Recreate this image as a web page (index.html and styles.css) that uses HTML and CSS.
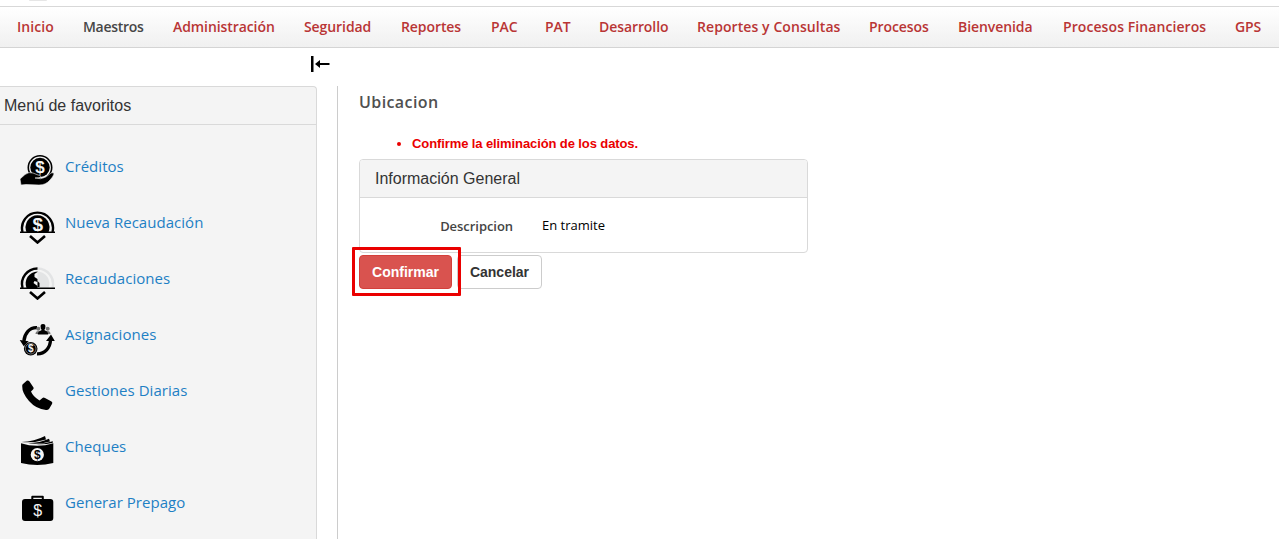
FILE: index.html
```html
<!DOCTYPE html>
<html lang="es">
<head>
<meta charset="utf-8">
<title>Ubicacion</title>
<link rel="stylesheet" href="styles.css">
</head>
<body>
<header class="top"><span class="logo-shadow"></span></header>
<nav class="nav">
  <a class="wide">Inicio</a><a class="active">Maestros</a><a>Administración</a><a>Seguridad</a><a>Reportes</a><a>PAC</a><a>PAT</a><a>Desarrollo</a><a class="wide">Reportes y Consultas</a><a>Procesos</a><a>Bienvenida</a><a class="wide">Procesos Financieros</a><a>GPS</a>
</nav>
<div class="toggle-row">
  <svg class="collapse" viewBox="0 0 20 16"><path d="M0 0h2.500v16H0zM4 8l5-4v3h9.500v2H9v3z"/></svg>
</div>
<div class="layout">
  <aside class="side">
    <h2 class="side-title">Menú de favoritos</h2>
    <ul class="menu">
      <li><svg class="icon" viewBox="0 0 36 36"><circle cx="21" cy="15.500" r="11.700" fill="none" stroke="#000" stroke-width="1.600"/><circle cx="21" cy="15.500" r="9.700"/><text class="dollar" x="21" y="21" font-size="17">$</text><path d="M1 27 6 22.500q4-3 8-1.500l5 2q3 0 3 2-2 1-6 1 6 2 11-1l5-4q3-1 3 1-1 3-4 6-4 5-11 5L7 32.500l-5 .5z" stroke="#f4f4f4" stroke-width=".6"/></svg><a>Créditos</a></li>
      <li><svg class="icon" viewBox="0 0 36 36"><path d="M3.500 24A15.500 15.500 0 1 1 33.500 24" fill="none" stroke="#000" stroke-width="2.400"/><path d="M7.500 24A12 12 0 1 1 29.500 24z"/><text class="dollar" x="18.700" y="23" font-size="19">$</text><path d="M1 23.500h35v1.400H1z"/><path d="M11 28l7.500 6.500L26 28" fill="none" stroke="#000" stroke-width="2.600"/></svg><a>Nueva Recaudación</a></li>
      <li><svg class="icon" viewBox="0 0 36 36"><path d="M18.500 4.500A15.500 15.500 0 0 1 33.500 24" fill="none" stroke="#e3e4e5" stroke-width="2.400"/><path d="M18.500 7.500A12 12 0 0 1 29.500 24h-11z" fill="#e3e4e5"/><path d="M18.500 4.500A15.500 15.500 0 0 0 3.500 24" fill="none" stroke="#000" stroke-width="2.400"/><path d="M18.500 7.500A12 12 0 0 0 7.500 24h11v-2l-4-3 1-2 3 1v-3l-3-2v-3l3-2z"/><path d="M18.500 17l2 2v4h-2z"/><path d="M1 23.500h35v1.400H1z"/><path d="M11 28l7.500 6.500L26 28" fill="none" stroke="#000" stroke-width="2.600"/></svg><a>Recaudaciones</a></li>
      <li><svg class="icon" viewBox="0 0 36 36"><path d="M18 7.600C10.500 7.200 5.500 13.500 4.900 21M18 33.800C26 34 31.300 27.500 31.500 20" fill="none" stroke="#000" stroke-width="3.300"/><path d="M.7 20l9 1.200-5 5zM27 21l5-6.500 3.800 6.500z"/><circle cx="11.700" cy="28.700" r="6.800"/><circle cx="11.700" cy="28.700" r="5.300" fill="none" stroke="#bbb" stroke-width=".6"/><text class="dollar" x="11.700" y="32.200" font-size="10">$</text><g fill="#777"><circle cx="19.300" cy="8.800" r="2"/><circle cx="28.700" cy="8.800" r="2"/><path d="M16.500 14q0-3 3-3h9q3 0 3 3z"/></g><path d="M24 4c2 0 2.600 1.300 2.400 3q-.2 2-1 2.800c.2 1.200 3.800 1.200 3.800 4.700H18.800c0-3.500 3.600-3.500 3.800-4.700q-.8-.8-1-2.800c-.2-1.700.4-3 2.400-3z"/></svg><a>Asignaciones</a></li>
      <li><svg class="icon" viewBox="0 0 36 36"><path d="M4 8l4-3.500q1.500-.5 2.500 1l4 6q.5 1-.5 2l-2 2q2 5 8.500 9l3-2.500q1-.8 2.500 0l6.500 3.500q1.500 1 .5 2.500l-3 5q-1 1.200-3 1-10-1-17-9Q3 17 3.200 10q0-1.300.8-2z"/></svg><a>Gestiones Diarias</a></li>
      <li><svg class="icon" viewBox="0 0 36 36"><path d="M2 11.300q16 5 32.300 0V31q-16 4-32.300 0z"/><path d="M2.500 10q13-.5 23.500-6l1 3.500Q16 11 2.500 10z"/><path d="M9 11.200q12-.2 21-4.400l1 2.700Q20 12.700 9 11.200z"/><path d="M17 12q9-.3 16.800-2.800v1.600Q25 13 17 12z"/><circle cx="18.300" cy="22.700" r="6.600" fill="#f4f4f4"/><text class="dollar dark" x="18.300" y="27" font-size="12">$</text></svg><a>Cheques</a></li>
      <li><svg class="icon" viewBox="0 0 36 36"><rect x="3" y="11" width="31.300" height="22" rx="3"/><path d="M13.300 12V8.700h10.500V12" fill="none" stroke="#000" stroke-width="2" stroke-linejoin="round"/><text class="dollar thin" x="18.600" y="27.500" font-size="16">$</text></svg><a>Generar Prepago</a></li>
    </ul>
  </aside>
  <main class="main">
    <h1 class="title">Ubicacion</h1>
    <ul class="errors"><li>Confirme la eliminación de los datos.</li></ul>
    <section class="panel">
      <h2 class="panel-head">Información General</h2>
      <div class="panel-body"><span class="label">Descripcion</span><span class="value">En tramite</span></div>
    </section>
    <div class="actions"><span class="confirm-wrap"><button class="btn danger">Confirmar</button></span><button class="btn">Cancelar</button></div>
  </main>
</div>
</body>
</html>
```
FILE: styles.css
```css
* { box-sizing: border-box; }
body { margin: 0; height: 539px; overflow: hidden; background: #fff; color: #333; font-family: "Open Sans", sans-serif; }
.top { height: 6px; overflow: hidden; }
.logo-shadow { display: block; width: 18px; height: 1px; margin-left: 29px; background: #e6e6e6; border-radius: 0 0 9px 9px; }
.nav {
  display: grid;
  grid-template-columns: 66px 90px 131px 97px 90px 54px 54px 98px 172px 89px 105px 172px 44px;
  height: 42px; padding-left: 17px; line-height: 40px;
  border-top: 1px solid #d8d8d8; border-bottom: 1px solid #d4d4d4;
  background: linear-gradient(#fff, #f0f0f0);
  font-size: 14px; font-weight: 600; color: #b93535; white-space: nowrap; letter-spacing: -.08px;
}
.nav .active { color: #474747; letter-spacing: -.3px; }
.nav .wide { letter-spacing: .08px; }
.toggle-row { height: 38px; padding: 8px 0 0 311px; }
.collapse { display: block; width: 20px; height: 16px; }
.layout { display: grid; grid-template-columns: 317px 20px 1fr; height: 453px; }
.side { background: #f4f4f4; border: 1px solid #d9d9d9; border-left: 0; border-bottom: 0; border-top-right-radius: 4px; }
.side-title { margin: 0; height: 38px; padding-left: 4px; border-bottom: 1px solid #d9d9d9; font: 16px/37px "Liberation Sans", sans-serif; }
.menu { list-style: none; margin: 0; padding: 27px 0 0 19px; }
.menu li { display: flex; gap: 10px; height: 56px; }
.icon { width: 36px; height: 36px; flex: none; }
.menu a { font-size: 15px; line-height: 28px; color: #1e80c4; white-space: nowrap; letter-spacing: .04px; }
.dollar { fill: #f4f4f4; font-family: "Liberation Sans", sans-serif; font-weight: 700; text-anchor: middle; }
.dollar.dark { fill: #000; }
.dollar.thin { font-weight: 400; }
.main { grid-column: 3; border-left: 1px solid #ccc; padding: 5px 0 0 21px; }
.title { margin: 0; font-size: 16px; line-height: 22px; font-weight: 600; color: #505050; letter-spacing: .4px; }
.errors { margin: 20px 0 0; padding: 0 0 0 53px; color: #ea0000; font: 700 13px/20px "Liberation Sans", sans-serif; height: 26px; letter-spacing: -.1px; }
.errors li::marker { font-size: 14px; }
.panel { width: 449px; height: 94px; border: 1px solid #d9d9d9; border-radius: 4px; overflow: hidden; }
.panel-head { margin: 0; height: 38px; padding-left: 15px; background: #f4f4f4; border-bottom: 1px solid #d9d9d9; font: 16px/37px "Liberation Sans", sans-serif; }
.panel-body { display: grid; grid-template-columns: 153px 1fr; gap: 29px; padding-top: 17px; line-height: 20px; font-size: 13px; }
.label { text-align: right; font-weight: 600; color: #444; padding-top: 1px; letter-spacing: -.05px; }
.value { color: #000; }
.actions { display: flex; margin: -6px 0 0 -7px; }
.confirm-wrap { position: relative; z-index: 1; width: 109px; height: 49px; padding: 5px 4px; border: 3px solid #ea0000; border-radius: 1px; }
.btn { width: 93px; height: 34px; padding: 0; border: 1px solid #ccc; border-radius: 4px; background: #fff; color: #333; font: 700 14px/20px "Liberation Sans", sans-serif; }
.danger { display: block; background: #d9534f; border-color: #d43f3a; color: #fff; }
.actions > .btn { width: 85px; margin: 8px 0 0 -4px; }
```
